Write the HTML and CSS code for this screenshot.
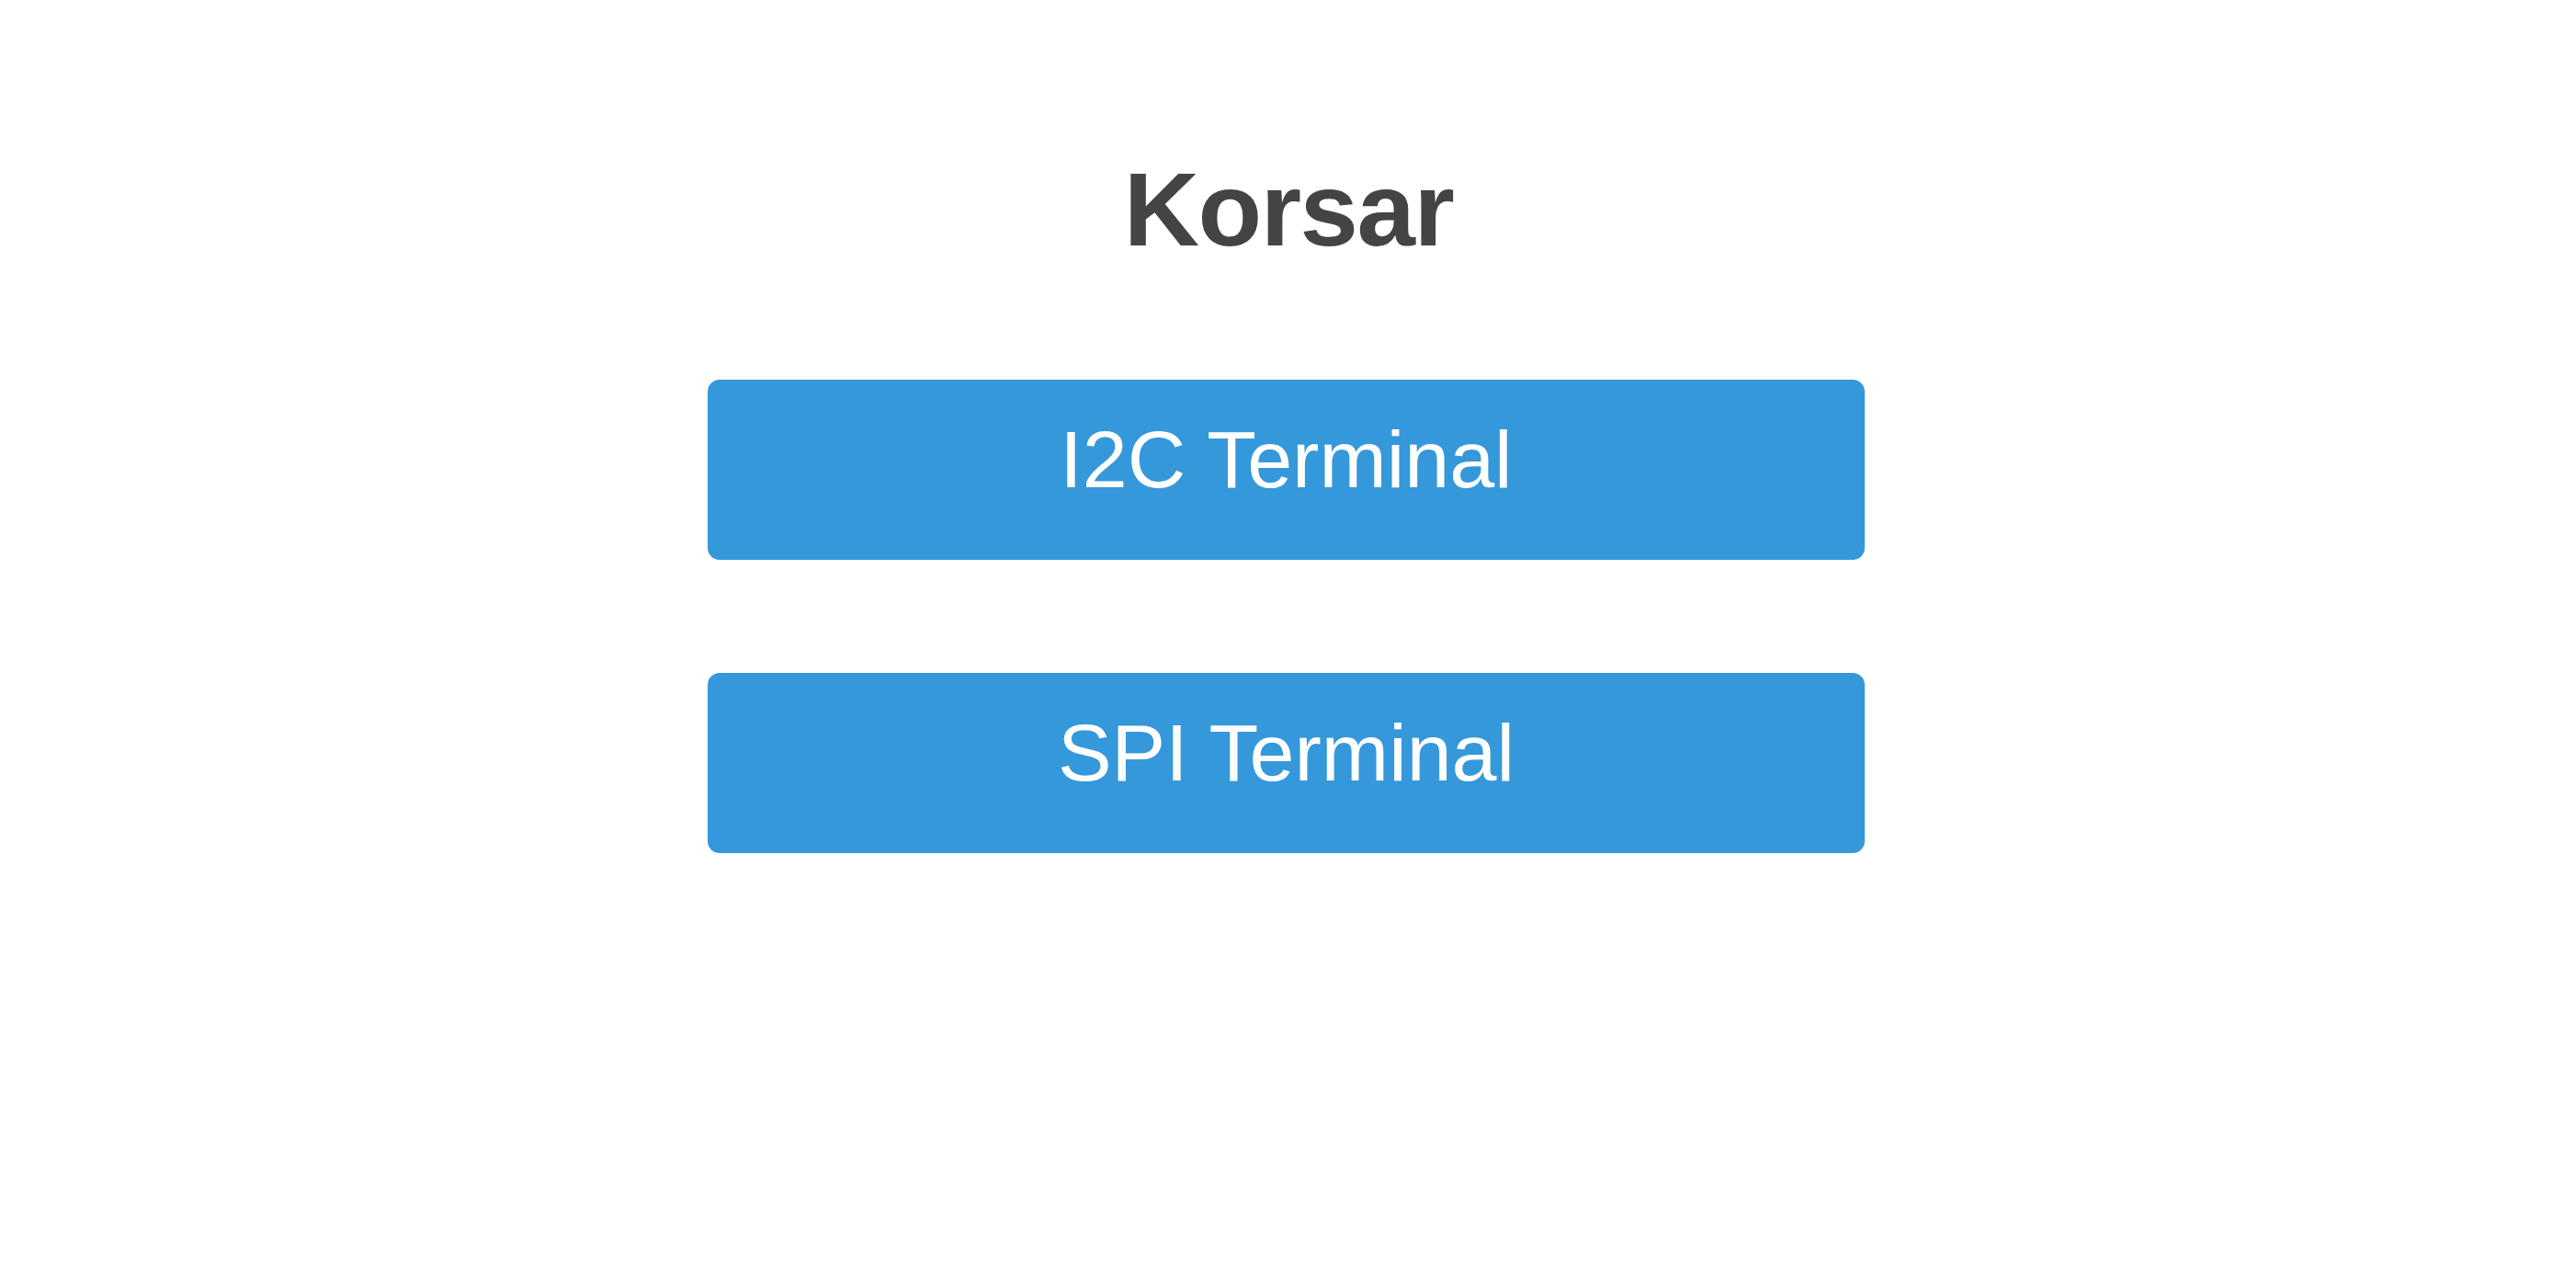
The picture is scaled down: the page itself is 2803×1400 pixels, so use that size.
FILE: index.html
```html
<!DOCTYPE html>
<html lang="en">
<head>
<meta charset="utf-8">
<title>Korsar</title>
<link rel="stylesheet" href="styles.css">
</head>
<body>
<main class="page">
  <h1 class="title">Korsar</h1>
  <nav class="menu">
    <a class="menu-button" href="#">I2C Terminal</a>
    <a class="menu-button" href="#">SPI Terminal</a>
  </nav>
</main>
</body>
</html>
```

FILE: styles.css
```css
html, body {
  margin: 0;
  padding: 0;
  background: #ffffff;
}

body {
  font-family: "Liberation Sans", Arial, Helvetica, sans-serif;
}

.page {
  display: flex;
  flex-direction: column;
  align-items: center;
  padding-top: 171px;
}

.title {
  margin: 0 0 0 1px;
  font-size: 114px;
  line-height: 114px;
  font-weight: bold;
  letter-spacing: -1.5px;
  color: #444444;
  text-align: center;
}

.menu {
  display: flex;
  flex-direction: column;
  gap: 123px;
  width: 1259px;
  margin-top: 128px;
  margin-right: 4px;
}

.menu-button {
  display: block;
  box-sizing: border-box;
  height: 196px;
  padding: 43px 0 0 0;
  background: #3598db;
  border-radius: 13px;
  color: #ffffff;
  text-decoration: none;
  text-align: center;
  font-size: 88px;
  line-height: 88px;
}
```
